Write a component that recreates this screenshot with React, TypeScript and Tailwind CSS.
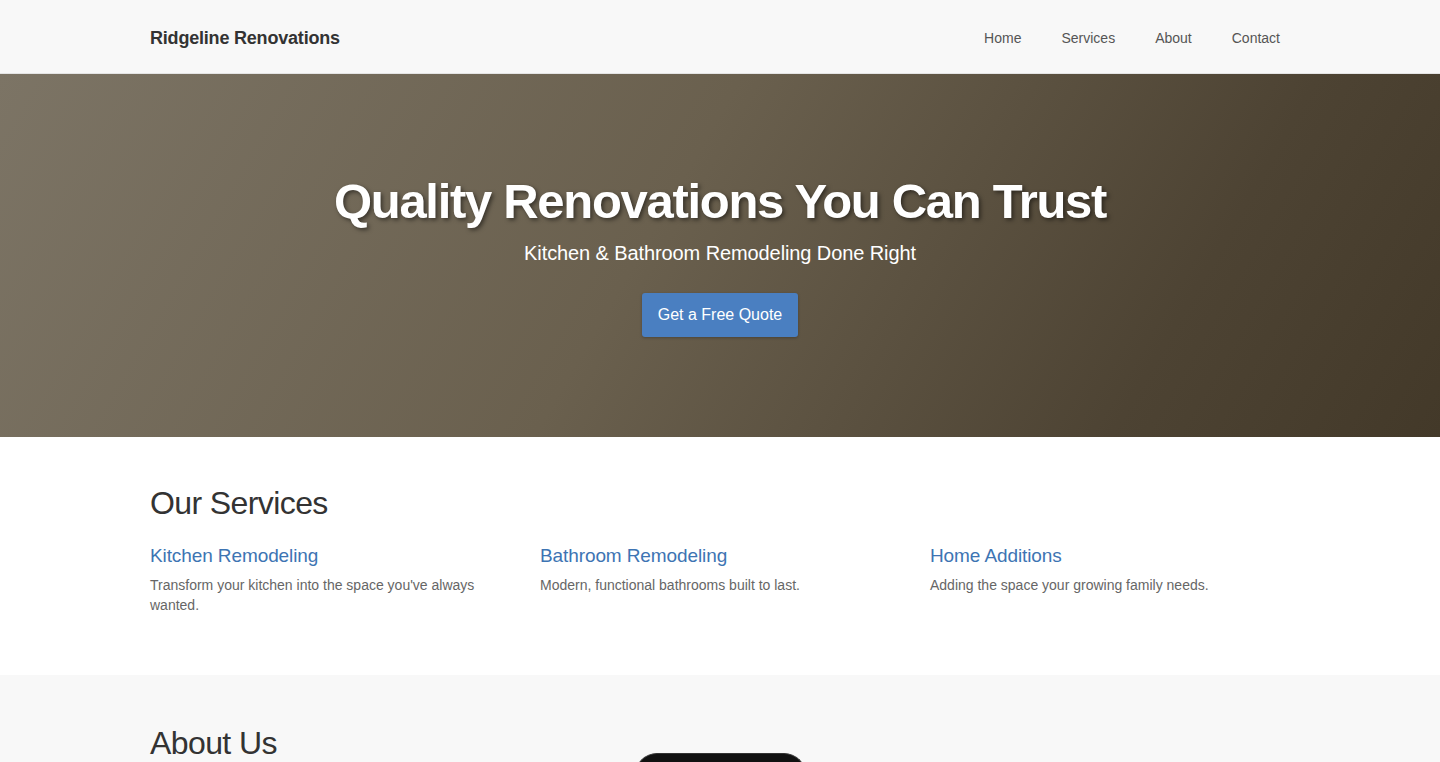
const services = [
  {
    title: "Kitchen Remodeling",
    text: "Transform your kitchen into the space you've always wanted.",
  },
  {
    title: "Bathroom Remodeling",
    text: "Modern, functional bathrooms built to last.",
  },
  {
    title: "Home Additions",
    text: "Adding the space your growing family needs.",
  },
];

const links = ["Home", "Services", "About", "Contact"];

function Navbar() {
  return (
    <nav className="h-[74px] bg-[#f8f8f8] border-b border-[#e4e4e4] shadow-[0_1px_3px_rgba(0,0,0,0.08)]">
      <div className="mx-auto w-[1140px] h-full flex items-center justify-between pt-[3px]">
        <a className="text-[18px] font-bold text-[#333] tracking-[-0.2px]">Ridgeline Renovations</a>
        <ul className="flex gap-[40px] pr-[10px] text-[14px] text-[#555]">
          {links.map((link) => (
            <li key={link}>
              <a>{link}</a>
            </li>
          ))}
        </ul>
      </div>
    </nav>
  );
}

function Hero() {
  return (
    <header className="h-[363px] bg-[linear-gradient(120deg,#7c7465_0%,#6a604e_45%,#4d4333_80%,#433929_100%)] flex flex-col items-center text-white">
      <h1 className="mt-[96px] text-[49px] leading-[62px] font-bold tracking-[-1.3px] [text-shadow:2px_2px_4px_rgba(0,0,0,0.5)]">
        Quality Renovations You Can Trust
      </h1>
      <p className="mt-[6px] text-[20px] leading-[30px] font-light tracking-[-0.1px]">
        Kitchen &amp; Bathroom Remodeling Done Right
      </p>
      <a className="mt-[25px] w-[156px] h-[44px] flex items-center justify-center rounded-[3px] bg-[#4a7fc1] text-[16px] shadow-[0_1px_3px_rgba(0,0,0,0.25)]">
        Get a Free Quote
      </a>
    </header>
  );
}

function Services() {
  return (
    <section className="bg-white pt-[42px] pb-[60px]">
      <div className="mx-auto w-[1140px]">
        <h2 className="text-[32px] leading-[48px] text-[#333] tracking-[-0.6px]">Our Services</h2>
        <div className="mt-[16px] grid grid-cols-3 gap-[30px]">
          {services.map((s) => (
            <div key={s.title}>
              <h3 className="text-[19px] leading-[26px] text-[#3d74b3] tracking-[-0.1px]">{s.title}</h3>
              <p className="mt-[6px] text-[14px] leading-[20px] text-[#666] pr-[10px]">{s.text}</p>
            </div>
          ))}
        </div>
      </div>
    </section>
  );
}

function About() {
  return (
    <section className="bg-[#f8f8f8] pt-[44px] pb-[60px]">
      <div className="mx-auto w-[1140px] flex">
        <h2 className="w-[485px] text-[32px] leading-[48px] text-[#333] tracking-[-0.6px] shrink-0">About Us</h2>
        <div className="mt-[34px] w-[171px] h-[160px] rounded-t-[22px] bg-[#111] border-l border-r border-t border-[#333]" />
      </div>
    </section>
  );
}

export default function App() {
  return (
    <div className="min-h-screen font-['Liberation_Sans',Arial,sans-serif] bg-white">
      <Navbar />
      <Hero />
      <Services />
      <About />
    </div>
  );
}
